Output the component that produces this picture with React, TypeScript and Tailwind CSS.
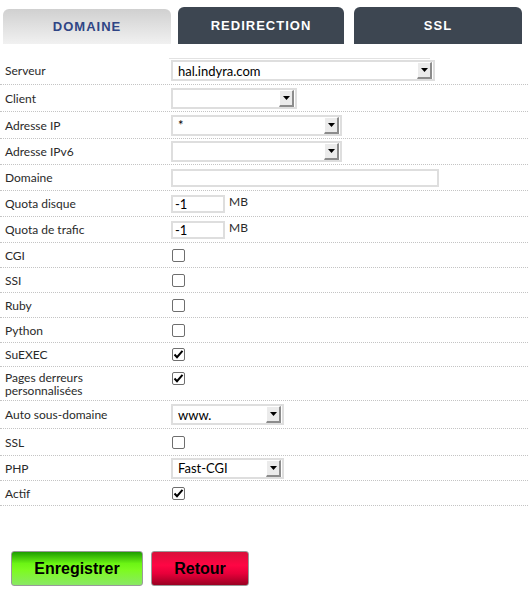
import React from "react";

function Select({ w, value }: { w: string; value: string }) {
  return (
    <div className={`${w} h-[21px] flex items-center border-2 border-[#dedede] bg-white`}>
      <span className="flex-1 pl-[5px] text-[13px] leading-[16px] text-black whitespace-nowrap">{value}</span>
      <div className="w-[15px] h-[17px] mr-px shrink-0 flex items-center justify-center bg-[#ebebeb] border-t border-l border-t-white border-l-white border-r-2 border-b-2 border-r-[#8c8c8c] border-b-[#8c8c8c]">
        <svg width="7" height="4" viewBox="0 0 7 4">
          <path d="M0 0H7L3.5 4Z" fill="#000" />
        </svg>
      </div>
    </div>
  );
}

function Checkbox({ checked }: { checked?: boolean }) {
  return (
    <div className="w-[13px] h-[13px] border border-[#6e6e6e] rounded-[2px] bg-white flex items-center justify-center">
      {checked && (
        <svg width="11" height="11" viewBox="0 0 11 11">
          <path d="M1.5 5.5L4 8.2L9.5 1.8" fill="none" stroke="#000" strokeWidth="2" />
        </svg>
      )}
    </div>
  );
}

function TextInput({ w, value }: { w: string; value?: string }) {
  return (
    <div className={`${w} h-[18px] border-2 border-[#dedede] bg-white flex items-center pl-[2px] text-[13px] leading-[14px] text-black`}>
      {value}
    </div>
  );
}

function Row({
  h,
  label,
  children,
  top,
}: {
  h: string;
  label: React.ReactNode;
  children?: React.ReactNode;
  top?: boolean;
}) {
  return (
    <div className={`${h} flex ${top ? "items-start pt-[4px]" : "items-center"} border-b border-dotted border-[#c4c4c4]`}>
      <div className="w-[171px] pl-[5px] text-[12px] text-[#2a2a2a] leading-[13px]">{label}</div>
      <div className="flex-1 flex items-center">{children}</div>
    </div>
  );
}

export default function App() {
  return (
    <div className="w-[528px] h-[600px] bg-white relative font-['Lato',sans-serif] overflow-hidden">
      <div className="flex items-start pt-[7px] h-[44px] font-['Liberation_Sans',Arial,sans-serif] font-bold text-[13px] tracking-[1px]">
        <div className="ml-[3px] mt-[2px] w-[168px] h-[35px] rounded-t-[6px] bg-[linear-gradient(to_bottom,#d0d0d0,#f1f1f1)] flex items-center justify-center text-[#2f4585]">
          DOMAINE
        </div>
        <div className="ml-[7px] w-[166px] h-[37px] rounded-t-[6px] bg-[#3d4651] flex items-center justify-center text-white">
          REDIRECTION
        </div>
        <div className="ml-[10px] w-[168px] h-[37px] rounded-t-[6px] bg-[#3d4651] flex items-center justify-center text-white">
          SSL
        </div>
      </div>

      <div className="mt-[13px] relative">
        <div className="absolute left-[169px] top-[1px] w-[261px] h-px bg-[#e2e2e2]" />
        <Row h="h-[28px]" label="Serveur">
          <Select w="w-[264px]" value="hal.indyra.com" />
        </Row>
        <Row h="h-[27px]" label="Client">
          <Select w="w-[126px]" value="" />
        </Row>
        <Row h="h-[27px]" label="Adresse IP">
          <Select w="w-[171px]" value="*" />
        </Row>
        <Row h="h-[26px]" label="Adresse IPv6">
          <Select w="w-[171px]" value="" />
        </Row>
        <Row h="h-[26px]" label="Domaine">
          <TextInput w="w-[268px]" />
        </Row>
        <Row h="h-[26px]" label="Quota disque">
          <TextInput w="w-[54px]" value="-1" />
          <span className="ml-[4px] -mt-[4px] text-[12px] leading-[14px] text-[#2a2a2a]">MB</span>
        </Row>
        <Row h="h-[26px]" label="Quota de trafic">
          <TextInput w="w-[54px]" value="-1" />
          <span className="ml-[4px] -mt-[4px] text-[12px] leading-[14px] text-[#2a2a2a]">MB</span>
        </Row>
        <Row h="h-[25px]" label="CGI">
          <div className="ml-px"><Checkbox /></div>
        </Row>
        <Row h="h-[25px]" label="SSI">
          <div className="ml-px"><Checkbox /></div>
        </Row>
        <Row h="h-[25px]" label="Ruby">
          <div className="ml-px"><Checkbox /></div>
        </Row>
        <Row h="h-[25px]" label="Python">
          <div className="ml-px"><Checkbox /></div>
        </Row>
        <Row h="h-[24px]" label="SuEXEC">
          <div className="ml-px"><Checkbox checked /></div>
        </Row>
        <Row h="h-[34px]" top label={<span>Pages derreurs<br />personnalisées</span>}>
          <div className="ml-px mt-px"><Checkbox checked /></div>
        </Row>
        <Row h="h-[28px]" label="Auto sous-domaine">
          <Select w="w-[113px]" value="www." />
        </Row>
        <Row h="h-[27px]" label="SSL">
          <div className="ml-px"><Checkbox /></div>
        </Row>
        <Row h="h-[25px]" label="PHP">
          <Select w="w-[113px]" value="Fast-CGI" />
        </Row>
        <Row h="h-[25px]" label="Actif">
          <div className="ml-px"><Checkbox checked /></div>
        </Row>
      </div>

      <div className="mt-[45px] flex font-['Liberation_Sans',Arial,sans-serif] font-bold text-[16px] text-black">
        <button className="ml-[11px] w-[132px] h-[35px] rounded-[3px] border border-[#9a9a9a] bg-[linear-gradient(to_bottom,#1d9c00_0%,#6cf514_35%,#7dfb20_55%,#8ae865_100%)]">
          Enregistrer
        </button>
        <button className="ml-[8px] w-[98px] h-[35px] rounded-[3px] border border-[#9a9a9a] bg-[linear-gradient(to_bottom,#d8103a_0%,#ff0644_40%,#e8003a_65%,#9a0022_100%)]">
          Retour
        </button>
      </div>
    </div>
  );
}
